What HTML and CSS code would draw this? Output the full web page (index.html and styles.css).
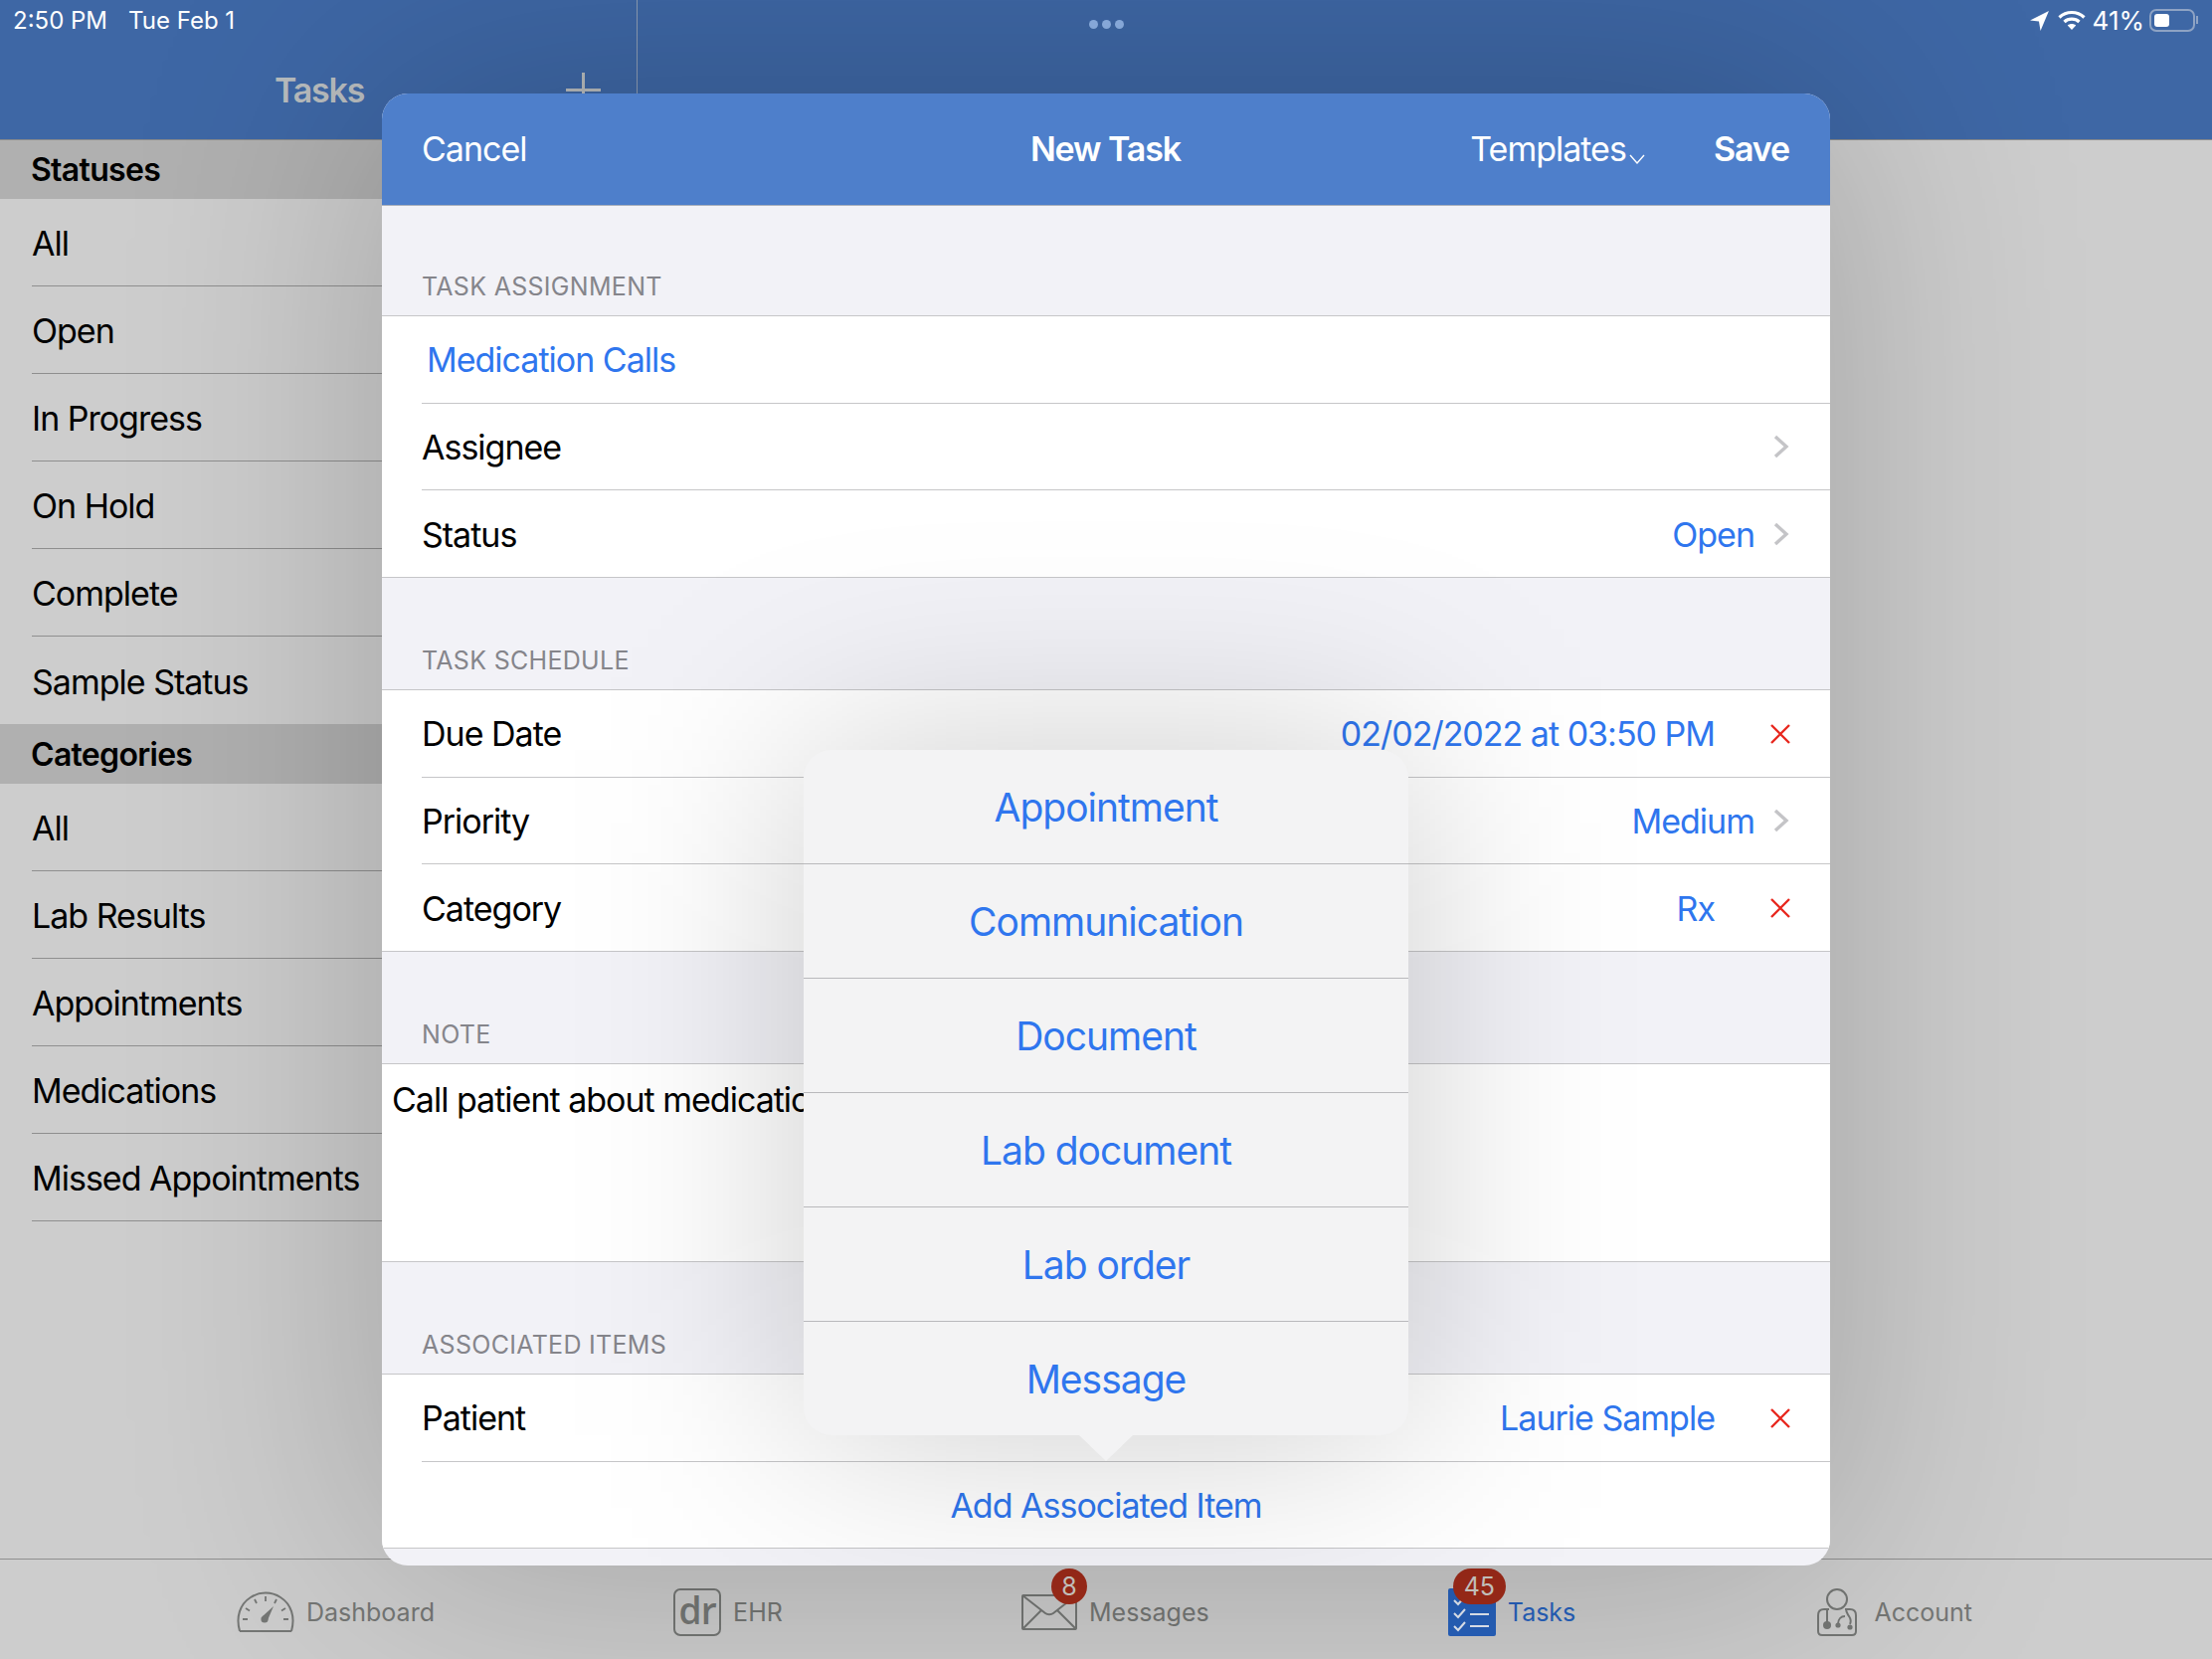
FILE: index.html
```html
<!DOCTYPE html>
<html lang="en">
<head>
    <meta charset="UTF-8">
    <title>New Task</title>
    <link rel="stylesheet" href="styles.css">
</head>
<body>
    <div class="app">
        <div class="topbar">
            <div class="top-left">
                <div class="status-left"><span>2:50 PM</span><span>Tue Feb 1</span></div>
                <div class="nav-left">
                    <span class="nav-title">Tasks</span>
                    <span class="nav-plus"></span>
                </div>
            </div>
            <div class="top-right">
                <div class="dots"><i></i><i></i><i></i></div>
                <div class="status-right">
                    <svg class="ico-loc" viewBox="0 0 20 20"><path d="M19 1 L1 10 L9.5 11 L11 20 Z" fill="#fff"/></svg>
                    <svg class="ico-wifi" viewBox="0 0 28 20" fill="none" stroke="#fff" stroke-width="3.2">
                        <path d="M1.5 7.5 C8.5 .8 19.5 .8 26.5 7.5"/>
                        <path d="M6.5 12 C10.5 8.2 17.5 8.2 21.5 12"/>
                        <path d="M14 20 L9.8 15.6 C12 13.6 16 13.6 18.2 15.6 Z" fill="#fff" stroke="none"/>
                    </svg>
                    <span>41%</span>
                    <div class="battery"><div class="battery-fill"></div></div>
                    <div class="battery-nub"></div>
                </div>
            </div>
        </div>

        <div class="main">
            <div class="sidebar">
                <div class="side-head first">Statuses</div>
                <div class="side-row">All</div>
                <div class="side-row">Open</div>
                <div class="side-row">In Progress</div>
                <div class="side-row">On Hold</div>
                <div class="side-row">Complete</div>
                <div class="side-row no-line">Sample Status</div>
                <div class="side-head">Categories</div>
                <div class="side-row">All</div>
                <div class="side-row">Lab Results</div>
                <div class="side-row">Appointments</div>
                <div class="side-row">Medications</div>
                <div class="side-row">Missed Appointments</div>
            </div>
        </div>

        <div class="tabbar">
            <div class="tab">
                <svg class="ico-dash" viewBox="0 0 58 42" fill="none" stroke="#757775" stroke-width="2">
                    <path d="M3 40 H55 M3 40 C-1 26 3 13 14 6 C23 0 35 0 44 6 C55 13 59 26 55 40"/>
                    <path d="M6 28 H11 M47 28 H52 M9 17 L13 19.5 M45 19.5 L49 17 M18 8 L20 12 M38 12 L40 8 M29 5 V10" stroke-width="1.8"/>
                    <path d="M26 25 L37 15 L31 29 Z" fill="#757775" stroke="none"/>
                    <circle cx="28" cy="28" r="3.6" fill="#757775" stroke="none"/>
                </svg>
                <span>Dashboard</span>
            </div>
            <div class="tab">
                <div class="ico-dr">dr</div>
                <span>EHR</span>
            </div>
            <div class="tab">
                <div class="tab-icon">
                    <svg class="ico-mail" viewBox="0 0 56 36" fill="none" stroke="#757775" stroke-width="2" stroke-linejoin="round">
                        <rect x="1" y="1" width="54" height="34" rx="1"/>
                        <path d="M1 1 L24 19 C26 20.5 30 20.5 32 19 L55 1 M1 35 L20 16 M55 35 L36 16"/>
                    </svg>
                    <div class="badge badge-msg">8</div>
                </div>
                <span>Messages</span>
            </div>
            <div class="tab tab-active">
                <div class="tab-icon">
                    <svg class="ico-tasks" viewBox="0 0 48 48" fill="none" stroke="#e6ecf6" stroke-width="2">
                        <rect width="48" height="48" rx="2" fill="#2762bd" stroke="none"/>
                        <path d="M6 12 L10 16 L17 8 M6 25 L10 29 L17 21 M6 38 L10 42 L17 34"/>
                        <path d="M22 14 H41 M22 26 H41 M22 38 H41"/>
                    </svg>
                    <div class="badge badge-task">45</div>
                </div>
                <span>Tasks</span>
            </div>
            <div class="tab tab-acct">
                <svg class="ico-acct" viewBox="0 0 40 48" fill="none" stroke="#757775" stroke-width="2">
                    <circle cx="20" cy="11" r="10"/>
                    <path d="M12 21 H7 C3 21 1 23 1 27 V43 C1 46 2 47 5 47 H35 C38 47 39 46 39 43 V27 C39 23 37 21 33 21 H28"/>
                    <path d="M10 22 V34 M29 22 C30 24 30 25 32 28 C34 31 34 34 33 36 M21 36 C21 31 24 28 28 28"/>
                    <circle cx="10" cy="37" r="4" fill="#757775" stroke="none"/>
                    <circle cx="21" cy="37" r="2.6" fill="#757775" stroke="none"/>
                    <circle cx="33" cy="39" r="2.6" fill="#757775" stroke="none"/>
                </svg>
                <span>Account</span>
            </div>
        </div>
    </div>

    <div class="modal">
        <div class="modal-head">
            <span>Cancel</span>
            <span class="bold">New Task</span>
            <div class="head-right">
                <span class="templates">Templates<svg viewBox="0 0 16 10" fill="none" stroke="#fff" stroke-width="1.4"><path d="M1 1 L8 9 L15 1"/></svg></span>
                <span class="bold">Save</span>
            </div>
        </div>

        <div class="sec-head first">Task Assignment</div>
        <div class="row"><span class="link pad">Medication Calls</span></div>
        <div class="row">
            <span>Assignee</span>
            <div class="val">
                <svg class="chev" viewBox="0 0 16 24"><path d="M2 2 L13 12 L2 22" /></svg>
            </div>
        </div>
        <div class="row last">
            <span>Status</span>
            <div class="val">
                <span class="link">Open</span>
                <svg class="chev" viewBox="0 0 16 24"><path d="M2 2 L13 12 L2 22" /></svg>
            </div>
        </div>

        <div class="sec-head">Task Schedule</div>
        <div class="row">
            <span>Due Date</span>
            <div class="val">
                <span class="link">02/02/2022 at 03:50 PM</span>
                <svg class="clear" viewBox="0 0 20 20"><path d="M1 1 L19 19 M19 1 L1 19" /></svg>
            </div>
        </div>
        <div class="row">
            <span>Priority</span>
            <div class="val">
                <span class="link">Medium</span>
                <svg class="chev" viewBox="0 0 16 24"><path d="M2 2 L13 12 L2 22" /></svg>
            </div>
        </div>
        <div class="row last">
            <span>Category</span>
            <div class="val">
                <span class="link">Rx</span>
                <svg class="clear" viewBox="0 0 20 20"><path d="M1 1 L19 19 M19 1 L1 19" /></svg>
            </div>
        </div>

        <div class="sec-head">Note</div>
        <div class="note">Call patient about medications</div>

        <div class="sec-head">Associated Items</div>
        <div class="row">
            <span>Patient</span>
            <div class="val">
                <span class="link">Laurie Sample</span>
                <svg class="clear" viewBox="0 0 20 20"><path d="M1 1 L19 19 M19 1 L1 19" /></svg>
            </div>
        </div>
        <div class="row last center"><span class="link">Add Associated Item</span></div>

        <div class="pop-shade"></div>
        <div class="popover">
            <div class="pop-row">Appointment</div>
            <div class="pop-row">Communication</div>
            <div class="pop-row">Document</div>
            <div class="pop-row">Lab document</div>
            <div class="pop-row">Lab order</div>
            <div class="pop-row end">Message</div>
            <div class="pop-tip"></div>
        </div>
    </div>
</body>
</html>
```

FILE: styles.css
```css
* {
    box-sizing: border-box;
}
html, body {
    margin: 0;
    height: 100%;
}
body {
    font-family: Inter, "Liberation Sans", sans-serif;
    font-size: 34px;
    letter-spacing: -1px;
    color: #000;
    background: #cdcdcd;
    overflow: hidden;
}
.app {
    display: flex;
    flex-direction: column;
    height: 1668px;
}

/* top bar */
.topbar {
    display: flex;
    height: 141px;
    background: #3e67a5;
    border-bottom: 1px solid #8b8b8b;
    color: #fff;
}
.top-left {
    width: 641px;
    border-right: 1px solid #8d9db5;
}
.status-left {
    display: flex;
    gap: 21px;
    height: 40px;
    padding-left: 13px;
    align-items: center;
    font-size: 24px;
    letter-spacing: 0;
}
.nav-left {
    display: flex;
    align-items: center;
    height: 100px;
    padding: 0 0 0 276px;
}
.nav-title {
    font-weight: 600;
    color: #b8bcbe;
    letter-spacing: -1.2px;
}
.nav-plus {
    width: 35px;
    height: 35px;
    margin-left: 203px;
    background:
        linear-gradient(#b8bcbe, #b8bcbe) center / 100% 3px no-repeat,
        linear-gradient(#b8bcbe, #b8bcbe) center / 3px 100% no-repeat;
}
.top-right {
    flex: 1;
    display: flex;
    justify-content: space-between;
    height: 40px;
    padding: 0 14px 0 454px;
}
.dots {
    display: flex;
    gap: 4px;
    align-items: center;
    padding-top: 8px;
}
.dots i {
    width: 9px;
    height: 9px;
    border-radius: 50%;
    background: #8fb3e6;
}
.status-right {
    display: flex;
    align-items: center;
    font-size: 26px;
    letter-spacing: 0;
}
.ico-loc {
    width: 21px;
    height: 21px;
    margin-right: 8px;
}
.ico-wifi {
    width: 28px;
    height: 20px;
    margin-right: 7px;
}
.battery {
    width: 46px;
    height: 23px;
    margin-left: 5px;
    padding: 3px;
    border: 2px solid #8ea3c4;
    border-radius: 7px;
}
.battery-fill {
    width: 15px;
    height: 100%;
    background: #fff;
    border-radius: 3px;
}
.battery-nub {
    width: 2px;
    height: 8px;
    margin-left: 1px;
    background: #8ea3c4;
}

/* sidebar */
.main {
    flex: 1;
    display: flex;
}
.sidebar {
    width: 640px;
}
.side-head {
    display: flex;
    align-items: center;
    height: 60px;
    padding-left: 31px;
    background: #b0b0b0;
    font-weight: 600;
    font-size: 32px;
    letter-spacing: -.7px;
}
.side-head.first {
    height: 59px;
}
.side-row {
    display: flex;
    align-items: center;
    height: 88px;
    margin-left: 32px;
    padding-top: 2px;
    border-bottom: 1px solid #8f8f8f;
}
.side-row.no-line {
    border-bottom: 0;
}

/* bottom tabs */
.tabbar {
    display: flex;
    justify-content: space-between;
    align-items: center;
    height: 101px;
    padding: 5px 241px 0 238px;
    border-top: 1px solid #8f8f8f;
    font-size: 25px;
    letter-spacing: 0;
    color: #757775;
}
.tab {
    display: flex;
    align-items: center;
    gap: 12px;
}
.tab-active {
    margin-right: 3px;
    color: #2762bd;
}
.tab-acct {
    gap: 17px;
}
.tab-icon {
    position: relative;
    display: flex;
}
.ico-dash {
    width: 58px;
    height: 42px;
}
.ico-dr {
    width: 48px;
    height: 48px;
    border: 2px solid #757775;
    border-radius: 7px;
    font-family: "Open Sans", sans-serif;
    font-size: 37px;
    font-weight: 600;
    line-height: 40px;
    letter-spacing: -1px;
    text-align: center;
}
.ico-mail {
    width: 56px;
    height: 36px;
}
.ico-tasks {
    width: 48px;
    height: 48px;
}
.ico-acct {
    width: 40px;
    height: 48px;
}
.badge {
    position: absolute;
    height: 36px;
    border-radius: 18px;
    background: #a32c1a;
    color: #d5d2cd;
    font-size: 25px;
    line-height: 36px;
    text-align: center;
}
.badge-msg {
    width: 36px;
    top: -26px;
    left: 30px;
}
.badge-task {
    width: 53px;
    top: -20px;
    left: 5px;
}

/* modal */
.modal {
    position: absolute;
    left: 384px;
    top: 94px;
    width: 1456px;
    height: 1480px;
    overflow: hidden;
    border-radius: 26px;
    background: #f2f2f7;
    box-shadow: 0 0 380px rgba(0, 0, 0, .22);
}
.modal-head {
    display: grid;
    grid-template-columns: 1fr auto 1fr;
    align-items: center;
    height: 113px;
    padding: 0 41px 1px 40px;
    background: #4e7fcb;
    border-bottom: 1px solid #a9b0bb;
    color: #fff;
}
.bold {
    font-weight: 600;
    letter-spacing: -1.1px;
}
.head-right {
    display: flex;
    justify-content: flex-end;
    gap: 69px;
}
.templates svg {
    width: 16px;
    height: 10px;
    margin-left: 3px;
    vertical-align: -3px;
}
.sec-head {
    display: flex;
    align-items: flex-end;
    height: 113px;
    padding: 0 0 14px 40px;
    border-bottom: 1px solid #c6c6c8;
    font-size: 25px;
    letter-spacing: .3px;
    line-height: 30px;
    text-transform: uppercase;
    color: #85858b;
}
.sec-head.first {
    height: 111px;
}
.row {
    display: flex;
    justify-content: space-between;
    align-items: center;
    height: 87.67px;
    padding: 0 40px;
    background: #fff linear-gradient(#c6c6c8, #c6c6c8) right bottom / calc(100% - 40px) 1px no-repeat;
}
.row.last {
    background-size: 100% 1px;
}
.row.center {
    justify-content: center;
}
.link {
    color: #2f76ee;
}
.pad {
    padding-left: 5px;
}
.val {
    display: flex;
    align-items: center;
}
.chev {
    width: 16px;
    height: 24px;
    margin: 0 1px 0 19px;
    fill: none;
    stroke: #c4c4c7;
    stroke-width: 3.4;
}
.clear {
    width: 20px;
    height: 20px;
    margin-left: 56px;
    stroke: #e8271e;
    stroke-width: 2.4;
}
.note {
    height: 199px;
    padding: 16px 10px;
    background: #fff;
    border-bottom: 1px solid #c6c6c8;
    line-height: 40px;
}

/* picker over the modal */
.pop-shade {
    position: absolute;
    left: 424px;
    top: 660px;
    width: 608px;
    height: 689px;
    background: rgba(0, 0, 0, .2);
    filter: blur(110px);
}
.popover {
    position: absolute;
    left: 424px;
    top: 660px;
    display: flex;
    flex-direction: column;
    width: 608px;
    height: 689px;
    border-radius: 28px;
    background: #f3f3f4;
}
.pop-row {
    flex: 1;
    display: flex;
    justify-content: center;
    align-items: center;
    font-size: 39px;
    color: #2f76ee;
    border-bottom: 1px solid #b9b9bc;
}
.pop-row.end {
    border-bottom: 0;
}
.pop-tip {
    position: absolute;
    left: 277px;
    bottom: -26px;
    width: 54px;
    height: 26px;
    background: #f3f3f4;
    clip-path: polygon(0 0, 100% 0, 50% 100%);
}
```
